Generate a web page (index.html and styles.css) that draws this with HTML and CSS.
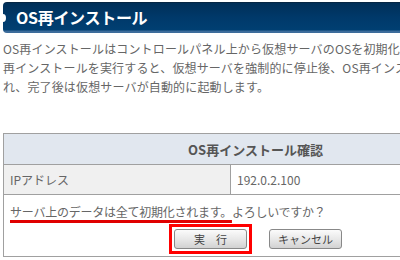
FILE: index.html
```html
<!DOCTYPE html>
<html lang="ja">
<head>
<meta charset="utf-8">
<link rel="stylesheet" href="styles.css">
</head>
<body>
<div class="page">
  <h1 class="title">OS再インストール</h1>
  <p class="intro">OS再インストールはコントロールパネル上から仮想サーバのOSを初期化します。OS<br>再インストールを実行すると、仮想サーバを強制的に停止後、OS再インストールが行わ<br>れ、完了後は仮想サーバが自動的に起動します。</p>
  <table class="confirm">
    <tr><th colspan="2" class="head">OS再インストール確認</th></tr>
    <tr><td class="label">IPアドレス</td><td class="value">192.0.2.100</td></tr>
    <tr>
      <td colspan="2" class="final">
        <div class="warn"><span class="mark">サーバ上のデータは全て初期化されます。</span>よろしいですか？</div>
        <div class="actions">
          <span class="highlight"><button class="btn">実　行</button></span>
          <button class="btn">キャンセル</button>
        </div>
      </td>
    </tr>
  </table>
</div>
</body>
</html>
```
FILE: styles.css
```css
html, body {
  margin: 0;
  padding: 0;
  background: #fff;
  overflow: hidden;
}
.page {
  width: 560px;
  padding: 2px 0 0 3px;
  font-family: "Noto Sans CJK JP", "Noto Sans", sans-serif;
  color: #666;
}
.title {
  position: relative;
  margin: 0;
  height: 31px;
  line-height: 30px;
  padding-left: 13px;
  font-size: 16px;
  font-weight: bold;
  color: #fff;
  letter-spacing: -0.3px;
  border-radius: 4px 0 0 4px;
  background: linear-gradient(#0b1d2f 0, #002f58 1px, #00396a 50%, #003f72 28px, #3d6c9b 29px, #3d6c9b 31px);
}
.title::before {
  content: "";
  position: absolute;
  left: -3px;
  top: 12px;
  width: 6px;
  height: 8px;
  border-radius: 50%;
  background: #fff;
}
.intro {
  margin: 6px 0 0;
  font-size: 12px;
  line-height: 19px;
  white-space: nowrap;
  letter-spacing: 0.15px;
}
.confirm {
  margin-top: 37px;
  width: 505px;
  border-collapse: collapse;
  border: 1px solid #a0a0a0;
  font-size: 12px;
}
.confirm td, .confirm th {
  border: 1px solid #a0a0a0;
  padding: 0 6px;
}
.confirm .head {
  height: 30px;
  background: #e1e7ef;
  font-size: 13px;
  font-weight: bold;
  color: #555;
  text-align: center;
}
.confirm .label {
  width: 214px;
  height: 29px;
  background: #f0f0f0;
}
.confirm .value {
  background: #fff;
}
.confirm .final {
  padding: 7px 6px 2px;
}
.warn {
  line-height: 20px;
  letter-spacing: -0.25px;
}
.mark {
  text-decoration: underline;
  text-decoration-color: #e00000;
  text-decoration-thickness: 3px;
  text-underline-offset: 3px;
}
.actions {
  display: flex;
  justify-content: center;
  align-items: center;
  gap: 17px;
  margin-top: 2px;
}
.highlight {
  display: flex;
  border: 3px solid #f00;
  padding: 2px;
}
.btn {
  width: 73px;
  height: 20px;
  padding: 0;
  border: 1px solid #888;
  border-radius: 3px;
  background: linear-gradient(#fbfbfb, #e8e8e8 50%, #d2d2d2);
  font-family: "Noto Sans CJK JP", sans-serif;
  font-size: 11px;
  color: #444;
  line-height: 18px;
}
```
